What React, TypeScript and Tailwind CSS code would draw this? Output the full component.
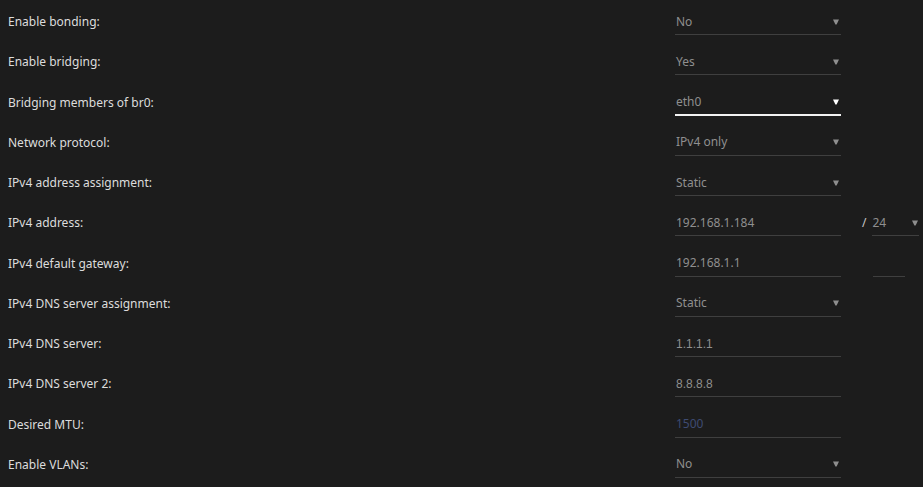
import React from "react";

type Row = {
  label: string;
  value: string;
  kind: "select" | "input";
  focused?: boolean;
  placeholder?: boolean;
  mono?: boolean;
  extra?: "prefix" | "blank";
};

const rows: Row[] = [
  { label: "Enable bonding:", value: "No", kind: "select" },
  { label: "Enable bridging:", value: "Yes", kind: "select" },
  { label: "Bridging members of br0:", value: "eth0", kind: "select", focused: true },
  { label: "Network protocol:", value: "IPv4 only", kind: "select" },
  { label: "IPv4 address assignment:", value: "Static", kind: "select" },
  { label: "IPv4 address:", value: "192.168.1.184", kind: "input", extra: "prefix" },
  { label: "IPv4 default gateway:", value: "192.168.1.1", kind: "input", extra: "blank" },
  { label: "IPv4 DNS server assignment:", value: "Static", kind: "select" },
  { label: "IPv4 DNS server:", value: "1.1.1.1", kind: "input", mono: true },
  { label: "IPv4 DNS server 2:", value: "8.8.8.8", kind: "input", mono: true },
  { label: "Desired MTU:", value: "1500", kind: "input", placeholder: true },
  { label: "Enable VLANs:", value: "No", kind: "select" },
];

// small flat-topped arrow used by the selects
function Caret({ white }: { white?: boolean }) {
  return (
    <svg width="6" height="6" viewBox="0 0 6 6" className="shrink-0">
      <path d="M0 0.5 H6 L3.6 5.5 H2.4 Z" fill={white ? "#ffffff" : "#8e8e8e"} />
    </svg>
  );
}

function Field({ row }: { row: Row }) {
  const line = row.focused ? "border-b-2 border-[#f2f2f2]" : "border-b border-[#3f3f3f]";
  const color = row.placeholder ? "text-[#3e4b72]" : "text-[#8f8f8f]";
  const font = row.mono ? "font-['Liberation_Sans',sans-serif]" : "";
  return (
    <div className={`w-[166px] h-[26px] flex items-center justify-between pl-[1px] pr-[2px] ${line}`}>
      <span className={`${color} ${font}`}>{row.value}</span>
      {row.kind === "select" && <Caret white={row.focused} />}
    </div>
  );
}

export default function App() {
  return (
    <main className="min-h-screen bg-[#1c1c1c] text-[12px] font-['Noto_Sans',sans-serif] pt-[9px] overflow-hidden">
      {rows.map((row) => (
        <div key={row.label} className="h-[40.27px] flex items-start">
          <div className="h-[26px] flex items-center">
            <div className="w-[675px] pl-2 text-[#dcdcdc]">{row.label}</div>
            <Field row={row} />
            {row.extra === "prefix" && (
              <div className="flex items-center h-[26px] ml-[21px]">
                <span className="text-[#c8c8c8] mr-[6px]">/</span>
                <div className="w-[47px] h-[26px] flex items-center justify-between border-b border-[#3f3f3f] pr-[1px]">
                  <span className="text-[#8f8f8f]">24</span>
                  <Caret />
                </div>
              </div>
            )}
            {row.extra === "blank" && (
              <div className="ml-[32px] w-[32px] h-[26px] border-b border-[#3f3f3f]" />
            )}
          </div>
        </div>
      ))}
    </main>
  );
}
